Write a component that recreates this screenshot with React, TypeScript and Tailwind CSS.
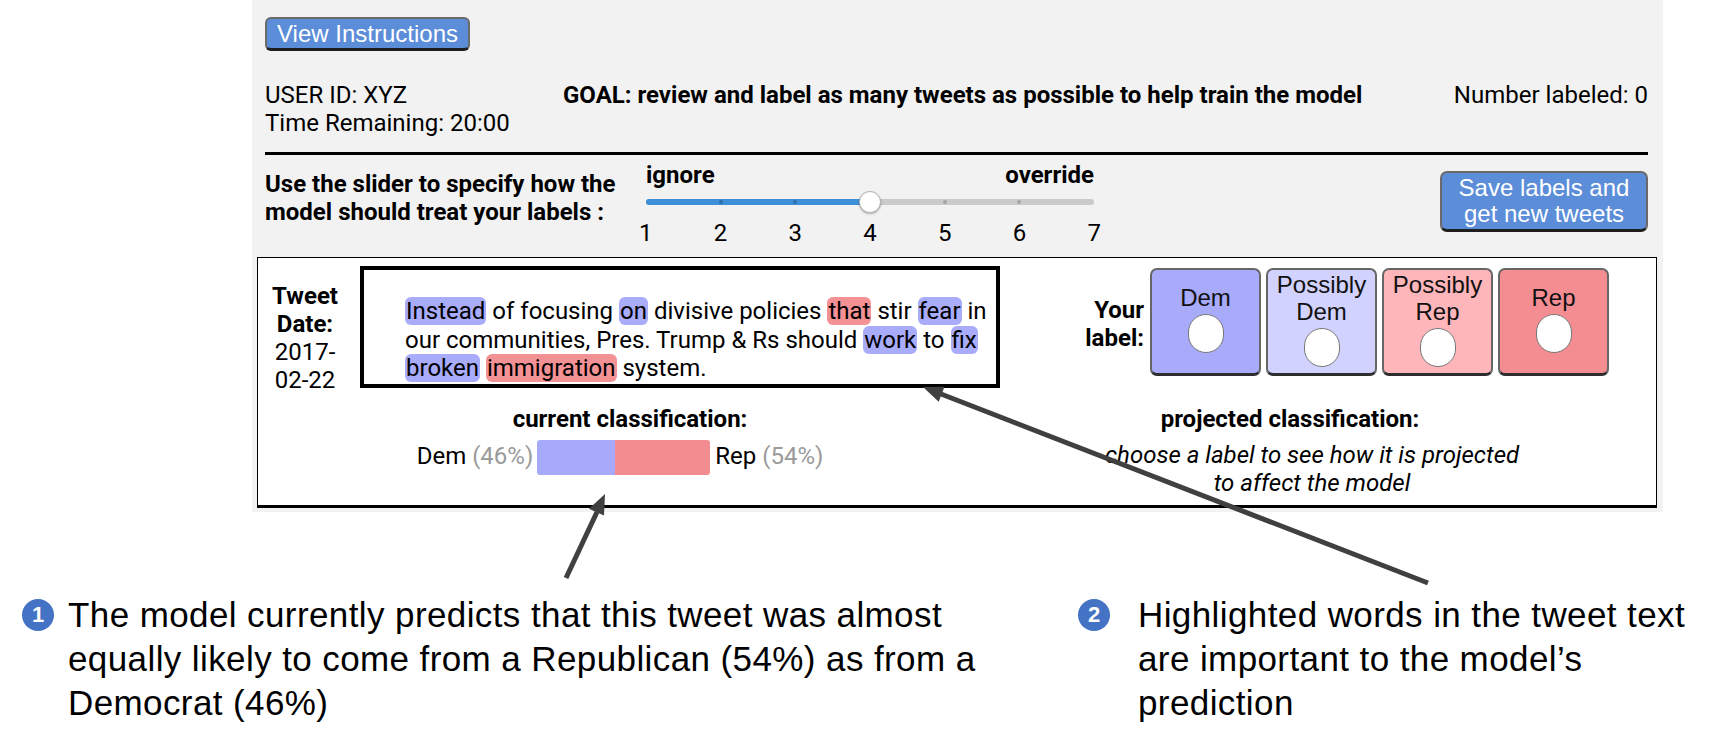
import React from "react";

const Hl = ({ red, children }: { red?: boolean; children: React.ReactNode }) => (
  <span className={red ? "rounded-[6px] bg-[#f49194] px-px" : "rounded-[6px] bg-[#a9abfb] px-px"}>{children}</span>
);

const LabelBox = ({ lines, bg }: { lines: string[]; bg: string }) => (
  <div
    className={`flex h-[108px] w-[111px] flex-col items-center rounded-[7px] border-2 border-b-[3px] border-[#666] border-b-[#2e2e2e] ${bg} ${
      lines.length === 1 ? "pt-[14px]" : "pt-px"
    }`}
  >
    <div className="text-center font-['Liberation_Sans',Arial,sans-serif] text-[24px] leading-[27px] text-[#111]">
      {lines.map((l) => (
        <div key={l}>{l}</div>
      ))}
    </div>
    <div className="mt-[3px] h-[39px] w-[36px] rounded-full border border-[#777] bg-white" />
  </div>
);

const Slider = () => (
  <div className="w-[448px]">
    <div className="flex justify-between text-[24px] font-bold leading-[28px]">
      <span>ignore</span>
      <span>override</span>
    </div>
    <div className="relative mt-[2px] flex h-[22px] items-center">
      <div className="h-[6px] w-full overflow-hidden rounded-full bg-[#cacaca]">
        <div className="h-full w-1/2 bg-[#3d8fd9]" />
      </div>
      {/* tick dots */}
      <div className="absolute left-[73px] top-[9px] h-[4px] w-[4px] rounded-full bg-[#2d6fae]" />
      <div className="absolute left-[147px] top-[9px] h-[4px] w-[4px] rounded-full bg-[#2d6fae]" />
      <div className="absolute left-[297px] top-[9px] h-[4px] w-[4px] rounded-full bg-[#a5a5a5]" />
      <div className="absolute left-[371px] top-[9px] h-[4px] w-[4px] rounded-full bg-[#a5a5a5]" />
      <div className="absolute left-[213px] top-0 h-[22px] w-[22px] rounded-full border border-[#b5b5b5] bg-white shadow-[0_1px_2px_rgba(0,0,0,0.3)]" />
    </div>
    <div className="-mx-[7px] mt-[6px] flex justify-between text-[24px] leading-[28px]">
      {[1, 2, 3, 4, 5, 6, 7].map((n) => (
        <span key={n}>{n}</span>
      ))}
    </div>
  </div>
);

export default function App() {
  return (
    <div className="relative h-[740px] w-[1732px] overflow-hidden bg-white font-['Roboto','Liberation_Sans',sans-serif] text-black">
      {/* app panel */}
      <div className="ml-[252px] w-[1411px] bg-[#f2f2f2] pb-[4px] pt-[17px]">
        <div className="pl-[13px] pr-[15px]">
          <button className="flex h-[34px] w-[205px] items-center justify-center rounded-[6px] border-2 border-b-[3px] border-[#6a6a6a] border-b-[#1e1e1e] bg-[#5b8dd8] font-['Liberation_Sans',Arial,sans-serif] text-[24px] leading-none text-white">
            View Instructions
          </button>

          <div className="mt-[30px] flex text-[24px] leading-[28px]">
            <div className="w-[298px]">
              <div>USER ID: XYZ</div>
              <div>Time Remaining: 20:00</div>
            </div>
            <div className="font-bold">GOAL: review and label as many tweets as possible to help train the model</div>
            <div className="flex-1 text-right">Number labeled: 0</div>
          </div>

          <div className="mt-[15px] h-[3px] bg-black" />

          <div className="mt-[6px] flex items-start">
            <div className="w-[381px] pt-[9px] text-[24px] font-bold leading-[28px]">
              <div>Use the slider to specify how the</div>
              <div>model should treat your labels :</div>
            </div>
            <Slider />
            <button className="ml-auto mt-[10px] flex h-[61px] w-[208px] flex-col items-center justify-center rounded-[7px] border-2 border-b-[3px] border-[#6a6a6a] border-b-[#1e1e1e] bg-[#5b8dd8] font-['Liberation_Sans',Arial,sans-serif] text-[24px] leading-[26px] text-white">
              <span>Save labels and</span>
              <span>get new tweets</span>
            </button>
          </div>
        </div>

        {/* tweet card */}
        <div className="ml-[5px] mt-[10px] w-[1400px] border border-b-[3px] border-black bg-white pb-[8px]">
          <div className="flex items-start">
            <div className="ml-[12px] mt-[24px] w-[70px] text-center text-[24px] leading-[28px]">
              <div className="font-bold">Tweet</div>
              <div className="font-bold">Date:</div>
              <div>2017-</div>
              <div>02-22</div>
            </div>
            <div className="ml-[20px] mt-[8px] h-[122px] w-[640px] border-4 border-black pl-[41px] pt-[27px] text-[24px] leading-[28.5px]">
              <div>
                <Hl>Instead</Hl> of focusing <Hl>on</Hl> divisive policies <Hl red>that</Hl> stir <Hl>fear</Hl> in
              </div>
              <div>
                our communities, Pres. Trump &amp; Rs should <Hl>work</Hl> to <Hl>fix</Hl>
              </div>
              <div>
                <Hl>broken</Hl> <Hl red>immigration</Hl> system.
              </div>
            </div>
            <div className="ml-auto mt-[38px] text-right text-[24px] font-bold leading-[28px]">
              <div>Your</div>
              <div>label:</div>
            </div>
            <div className="ml-[6px] mr-[47px] mt-[10px] flex gap-[5px]">
              <LabelBox lines={["Dem"]} bg="bg-[#a8aafa]" />
              <LabelBox lines={["Possibly", "Dem"]} bg="bg-[#d1d2fd]" />
              <LabelBox lines={["Possibly", "Rep"]} bg="bg-[#feb6ba]" />
              <LabelBox lines={["Rep"]} bg="bg-[#f38d91]" />
            </div>
          </div>

          <div className="mt-[11px] flex text-[24px] leading-[28px]">
            <div className="w-[724px]">
              <div className="pl-[20px] text-center font-bold">current classification:</div>
              <div className="mt-[7px] flex items-center justify-center">
                <span className="-mt-[4px]">
                  Dem <span className="text-[#9a9a9a]">(46%)</span>
                </span>
                <div className="ml-[4px] flex h-[35px] w-[173px] overflow-hidden rounded-[3px]">
                  <div className="w-[78px] bg-[#a7a9fa]" />
                  <div className="flex-1 bg-[#f28c90]" />
                </div>
                <span className="-mt-[4px] ml-[5px]">
                  Rep <span className="text-[#9a9a9a]">(54%)</span>
                </span>
              </div>
            </div>
            <div className="w-[616px] text-center">
              <div className="font-bold">projected classification:</div>
              <div className="mt-[8px] pl-[44px] italic">
                <div>choose a label to see how it is projected</div>
                <div>to affect the model</div>
              </div>
            </div>
          </div>
        </div>
      </div>

      {/* annotations */}
      <div className="mt-[81px] flex font-['Liberation_Sans',Arial,sans-serif] text-[35px] leading-[44px] tracking-[0.4px]">
        <div className="ml-[22px] flex w-[1056px] items-start">
          <div className="mt-[6px] flex h-[32px] w-[32px] shrink-0 items-center justify-center rounded-full bg-[#4472c4] text-[22px] font-bold tracking-normal text-white">
            1
          </div>
          <div className="ml-[14px]">
            The model currently predicts that this tweet was almost
            <br />
            equally likely to come from a Republican (54%) as from a
            <br />
            Democrat (46%)
          </div>
        </div>
        <div className="flex items-start">
          <div className="mt-[6px] flex h-[32px] w-[32px] shrink-0 items-center justify-center rounded-full bg-[#4472c4] text-[22px] font-bold tracking-normal text-white">
            2
          </div>
          <div className="ml-[28px]">
            Highlighted words in the tweet text
            <br />
            are important to the model’s
            <br />
            prediction
          </div>
        </div>
      </div>

      {/* arrows */}
      <svg className="pointer-events-none absolute left-0 top-0" width="1732" height="740">
        <line x1="566" y1="578" x2="597" y2="512" stroke="#404040" strokeWidth="5" />
        <polygon points="605,494 604,515.5 589,508.7" fill="#404040" />
        <line x1="1428" y1="583" x2="941" y2="394" stroke="#404040" strokeWidth="5" />
        <polygon points="923,387 944.5,386.7 938.7,401.7" fill="#404040" />
      </svg>
    </div>
  );
}
